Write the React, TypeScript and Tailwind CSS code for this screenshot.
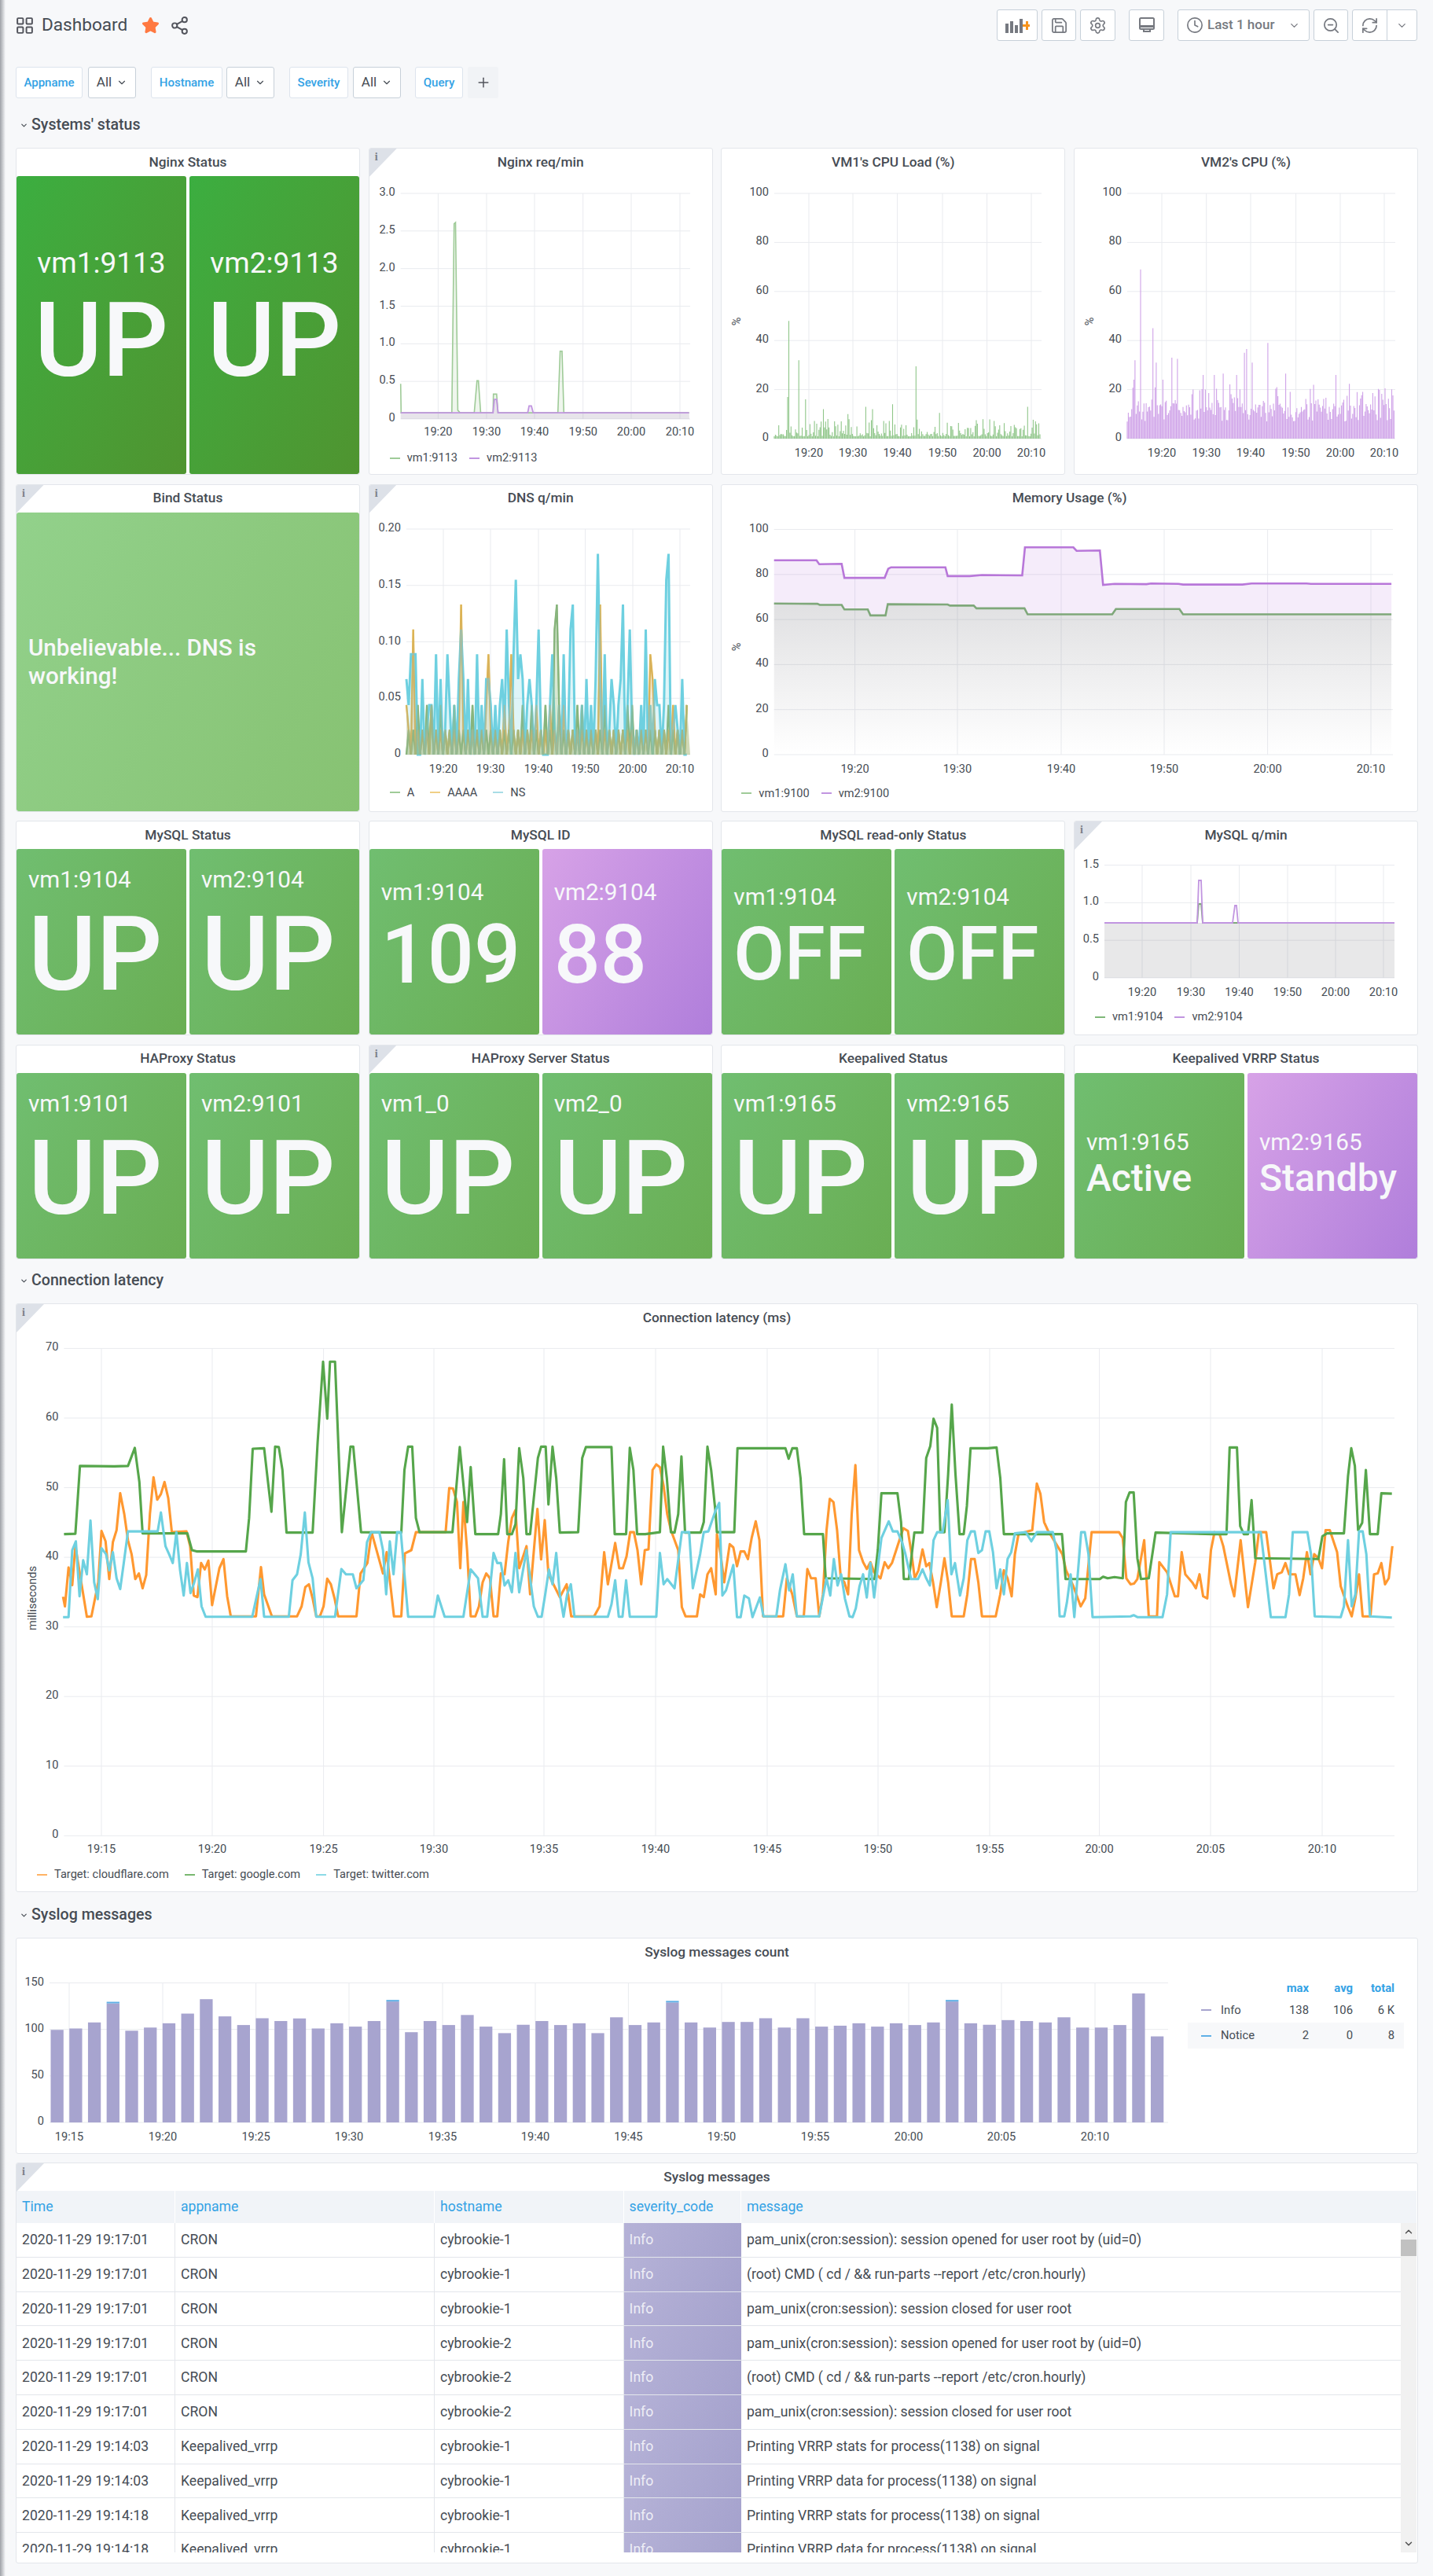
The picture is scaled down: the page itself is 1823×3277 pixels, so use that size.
import React from 'react';
import { ChevronDown, Clock, LayoutGrid, Plus, RefreshCw, Save, Settings, Share2, Star, ZoomOut, ChevronUp } from 'lucide-react';

const GREEN = '#56a64b';
const ORANGE = '#ff9830';
const BLUE = '#6ed0e0';

// series read off the chart, in crop coordinates
const latencyGreen = [
  '140,650 165,649 175,480 250,481 280,480 295,435 305,520 312,648 410,648 420,690 430,693 538,693 545,610 553,437 578,436 594,594 602,432 610,433 618,490 627,646 684,646 695,420 707,220 716,362 722,220 733,220 748,645 767,432 773,432 790,645 878,646 885,490 893,432 902,432 910,610 918,645 990,645 1006,433 1022,620 1030,483 1040,650 1090,650 1096,600 1103,463 1110,650 1120,650 1128,625 1136,436 1145,510 1152,650 1160,650 1177,460 1184,432 1194,432 1200,576 1209,432 1217,510 1225,646 1265,645 1274,460 1282,433 1338,433 1345,650 1370,650 1378,435 1386,490 1394,650 1412,650 1444,645 1451,432 1459,510 1468,645 1476,646 1484,600 1491,456 1499,646 1533,646 1540,620 1548,432 1556,490 1566,600',
  '0,645 38,645 45,436 150,436 157,462 165,436 175,436 183,510 191,650 232,650 238,760 345,762 352,690 360,548 395,548 403,620 409,762 420,762 432,646 450,646 458,460 467,430 474,362 482,385 489,645 498,645 506,500 514,327 522,500 531,650 540,650 547,580 555,436 592,436 612,434 620,510 628,650 755,650 763,762 838,762 845,756 855,760 870,757 888,760 895,570 903,546 912,546 920,710 928,762 945,760 960,646 1085,650 1115,650 1122,434 1138,434 1145,630 1153,650 1162,650 1170,565 1178,710 1316,712 1325,655 1335,648 1372,648 1381,505 1388,436 1396,480 1403,640 1412,622 1420,490 1429,650 1446,650 1454,548 1477,549',
];
const latencyOrange = [
  '138,806 142,830 150,733 158,777 165,680 175,750 190,856 200,855 215,770 222,642 231,668 239,762 247,670 255,640 263,548 272,600 280,665 288,700 296,762 304,748 312,785 320,752 328,600 336,508 344,564 352,550 360,520 368,560 376,645 408,643 416,680 424,803 432,807 440,722 448,738 456,716 464,827 480,735 489,712 497,805 505,855 560,855 571,732 578,800 595,855 650,855 660,830 668,782 676,775 684,810 692,855 700,855 708,830 716,761 724,775 732,810 740,855 780,855 789,748 804,722 813,645 838,748 846,695 862,855 878,855 886,698 900,690 910,645 975,645 983,535 991,536 1000,570 1007,735 1014,570 1022,690 1030,855 1040,855 1048,830 1056,770 1064,748 1072,760 1080,855 1088,855 1096,748 1104,750 1112,670 1120,610 1128,590 1136,735 1152,680 1160,800 1176,587 1184,713 1192,615 1200,750 1225,807 1240,775 1250,855 1300,855 1312,830 1322,695 1330,775 1346,672 1355,735 1363,735 1371,705 1379,645 1387,645 1395,690 1403,775 1411,690 1419,688 1428,490 1436,476 1444,483 1452,530 1460,600 1468,640 1484,690 1492,832 1500,855 1525,855 1532,800 1540,807 1548,750 1556,735 1566,800',
  '0,650 8,700 16,770 28,675 36,683 44,730 52,693 60,693 68,712 76,660 85,618 93,665 101,855 145,855 153,760 165,800 175,855 190,855 198,737 206,760 216,760 224,855 232,800 240,640 247,562 255,570 263,640 271,760 279,770 287,800 295,600 303,478 311,690 320,720 328,737 336,720 344,745 358,760 367,720 375,735 383,722 395,680 408,635 418,642 426,700 433,760 441,740 450,688 458,730 465,722 473,770 481,832 490,770 498,710 506,770 514,855 540,855 548,800 556,712 564,712 572,770 580,855 610,855 620,800 628,740 636,760 645,805 652,700 660,650 690,640 700,524 708,550 716,620 724,640 756,700 764,740 780,780 796,830 806,810 820,645 880,645 888,660 896,760 905,775 913,773 920,762 935,665 945,855 963,855 968,720 985,745 1002,805 1009,805 1017,695 1025,750 1040,770 1048,785 1056,750 1064,805 1073,810 1081,690 1089,645 1100,650 1108,680 1125,775 1132,805 1146,665 1162,832 1178,720 1186,645 1202,645 1218,785 1226,750 1236,745 1244,722 1252,750 1266,750 1275,802 1283,760 1291,695 1299,750 1307,700 1316,710 1324,735 1332,640 1341,640 1357,695 1365,780 1381,832 1389,855 1397,810 1405,750 1413,855 1430,855 1438,750 1446,748 1454,722 1462,775 1470,760 1478,680',
];
const latencyBlue = [
  '138,857 150,857 158,690 166,668 174,805 182,715 190,750 198,616 206,770 214,812 222,685 232,700 239,740 247,695 255,760 263,787 271,720 280,643 345,643 352,596 362,680 370,700 378,722 386,645 394,740 402,803 409,722 417,797 425,770 433,738 441,830 450,856 552,856 570,762 578,856 632,856 640,765 650,750 658,700 667,596 675,720 684,760 692,856 733,856 747,737 757,750 772,750 780,785 795,765 803,670 812,645 830,645 838,690 845,800 853,668 861,750 869,645 877,645 893,856 950,856 958,803 973,856 1014,856 1030,738 1046,760 1056,856 1066,856 1080,697 1088,722 1096,722 1104,778 1112,765 1120,795 1128,697 1136,795 1152,690 1168,830 1177,856 1185,856 1193,800 1201,738 1209,775 1217,697 1225,800 1233,856 1241,800 1249,775 1257,856 1330,856 1338,825 1346,765 1354,856 1362,856 1370,765 1378,856 1436,856 1444,697 1452,775 1460,762 1476,785 1492,645 1508,645 1516,785 1532,700 1540,645 1550,643 1566,590',
  '5,572 12,803 20,790 36,727 44,857 52,857 60,803 70,810 78,857 94,808 102,855 130,855 138,790 150,725 158,790 166,750 175,855 224,855 240,760 248,803 256,712 264,778 272,750 280,810 290,855 297,857 304,835 312,780 320,750 328,808 336,722 344,808 360,660 376,618 385,643 395,643 405,670 412,697 425,762 440,762 450,738 458,760 466,778 474,665 482,645 494,645 505,565 513,750 521,722 532,803 540,760 548,665 556,643 564,643 572,697 580,690 588,643 596,643 604,695 612,785 620,738 628,800 636,712 644,695 652,648 676,645 688,668 700,645 735,645 743,690 750,855 760,855 766,820 774,750 782,857 797,645 805,645 813,700 822,857 905,855 912,852 920,857 975,857 985,800 993,645 1190,645 1212,857 1244,857 1252,800 1260,645 1292,645 1300,700 1308,855 1365,857 1372,830 1381,665 1389,830 1397,800 1405,643 1413,643 1421,700 1429,855 1477,858',
];

const memPurple = '125,228 218,228 224,239 273,238 279,278 367,278 375,252 381,248 500,248 505,273 553,273 580,270 668,271 674,191 780,191 787,201 838,200 845,298 870,295 940,296 950,294 1010,295 1020,297 1150,297 1170,294 1290,294 1300,295 1476,295';
const memGreen = '125,351 220,352 225,355 273,355 279,368 330,368 336,385 369,385 374,353 505,354 510,357 562,357 568,365 673,365 680,382 865,382 873,367 1012,367 1020,382 1075,382 1476,382';

const syslogCounts = [
  99.5, 101, 107.5, 128, 98.6, 102, 106.6, 117, 132.5, 114, 104.7, 112, 109, 111.8, 101, 106.6, 103, 109, 130, 97, 109, 104.7, 115.5, 103, 96, 105, 109, 104.7, 106.6, 96, 113, 104.7, 107.5, 129, 107.5, 102,
  108, 108, 112, 102, 112, 103, 104, 106.6, 103, 106.6, 104.7, 107.5, 130, 106.6, 105, 110, 109, 107.5, 113, 102, 102, 104.7, 138.7, 92.5,
];

const tableRows = [
  ['2020-11-29 19:17:01', 'CRON', 'cybrookie-1', 'pam_unix(cron:session): session opened for user root by (uid=0)'],
  ['2020-11-29 19:17:01', 'CRON', 'cybrookie-1', '(root) CMD ( cd / && run-parts --report /etc/cron.hourly)'],
  ['2020-11-29 19:17:01', 'CRON', 'cybrookie-1', 'pam_unix(cron:session): session closed for user root'],
  ['2020-11-29 19:17:01', 'CRON', 'cybrookie-2', 'pam_unix(cron:session): session opened for user root by (uid=0)'],
  ['2020-11-29 19:17:01', 'CRON', 'cybrookie-2', '(root) CMD ( cd / && run-parts --report /etc/cron.hourly)'],
  ['2020-11-29 19:17:01', 'CRON', 'cybrookie-2', 'pam_unix(cron:session): session closed for user root'],
  ['2020-11-29 19:14:03', 'Keepalived_vrrp', 'cybrookie-1', 'Printing VRRP stats for process(1138) on signal'],
  ['2020-11-29 19:14:03', 'Keepalived_vrrp', 'cybrookie-1', 'Printing VRRP data for process(1138) on signal'],
  ['2020-11-29 19:14:18', 'Keepalived_vrrp', 'cybrookie-1', 'Printing VRRP stats for process(1138) on signal'],
  ['2020-11-29 19:14:18', 'Keepalived_vrrp', 'cybrookie-1', 'Printing VRRP data for process(1138) on signal'],
];

const rng = (seed: number) => () => {
  seed = (seed * 16807) % 2147483647;
  return seed / 2147483647;
};

const parsePts = (s: string, sx: (x: number) => number, sy: (y: number) => number) =>
  s.split(' ').map((p) => {
    const [x, y] = p.split(',').map(Number);
    return `${sx(x).toFixed(1)},${sy(y).toFixed(1)}`;
  }).join(' ');

const latencyPts = (pair: string[]) => {
  const sy = (y: number) => 1620 + y / 1.96;
  return parsePts(pair[0], (x) => x / 1.72, sy) + ' ' + parsePts(pair[1], (x) => 912 + x / 1.72, sy);
};

const memX = (x: number) => 912 + x / 1.72;
const memY = (y: number) => 610 + y / 2.24;

type ChartProps = {
  ox: number;
  oy: number;
  w: number;
  h: number;
  x0: number;
  x1: number;
  yTop: number;
  yBot: number;
  yTicks: string[];
  xTicks: [string, number][];
  labelY: number;
  yTitle?: [string, number, number];
  children?: React.ReactNode;
};

// plot with page coordinates, shifted to the svg's own origin
const Chart = ({ ox, oy, w, h, x0, x1, yTop, yBot, yTicks, xTicks, labelY, yTitle, children }: ChartProps) => (
  <svg width={w} height={h} className="block shrink-0">
    <g transform={`translate(${-ox},${-oy})`}>
      {yTicks.map((t, i) => {
        const y = yTop + ((yBot - yTop) * i) / (yTicks.length - 1);
        return (
          <g key={t}>
            <line x1={x0} x2={x1} y1={y} y2={y} stroke="#e9ebef" />
            <text x={x0 - 7} y={y - 2} textAnchor="end" dominantBaseline="central" fontSize="14.6" fill="#464c54">{t}</text>
          </g>
        );
      })}
      {xTicks.map(([t, x]) => (
        <g key={t}>
          <line x1={x} x2={x} y1={yTop} y2={yBot} stroke="#e9ebef" />
          <text x={x} y={labelY} textAnchor="middle" dominantBaseline="central" fontSize="14.6" fill="#464c54">{t}</text>
        </g>
      ))}
      {yTitle && (
        <text x={yTitle[1]} y={yTitle[2]} textAnchor="middle" dominantBaseline="central" fontSize="14.6" fill="#464c54" transform={`rotate(-90 ${yTitle[1]} ${yTitle[2]})`}>{yTitle[0]}</text>
      )}
      {children}
    </g>
  </svg>
);

const InfoCorner = () => (
  <>
    <div className="absolute left-0 top-0 w-[35px] h-[36px] bg-[#dde1e8] [clip-path:polygon(0_0,100%_0,0_100%)]" />
    <span className="absolute left-[7px] top-[2px] text-[14px] leading-[18px] font-bold font-['Liberation_Serif',serif] text-[#7b8087]">i</span>
  </>
);

const Panel = ({ title, info, className, children }: { title: string; info?: boolean; className?: string; children: React.ReactNode }) => (
  <div className={`relative flex flex-col bg-white border border-[#e3e6eb] rounded-[3px] overflow-hidden ${className ?? ''}`}>
    {info && <InfoCorner />}
    <div className="h-[35px] shrink-0 flex items-center justify-center text-[17.3px] font-medium text-[#464c54]">{title}</div>
    {children}
  </div>
);

const Legend = ({ items, className }: { items: [string, string][]; className: string }) => (
  <div className={`flex items-center gap-[15px] text-[14.6px] text-[#464c54] ${className}`}>
    {items.map(([name, color]) => (
      <div key={name} className="flex items-center gap-[9px]">
        <span className="w-[13px] h-[2px]" style={{ backgroundColor: color }} />
        <span>{name}</span>
      </div>
    ))}
  </div>
);

type CellProps = { label: string; value: string; tone: string; labelCls: string; valueCls: string; align?: string };

const TONES: Record<string, string> = {
  dark: 'from-[#3bae40] to-[#4f9430]',
  green: 'from-[#70be70] to-[#6aae53]',
  purple: 'from-[#d7a2e7] to-[#b07edb]',
};

const Cell = ({ label, value, tone, labelCls, valueCls, align }: CellProps) => (
  <div className={`flex-1 flex flex-col justify-center rounded-[3px] text-[#f7f8fa] bg-linear-120 whitespace-nowrap overflow-hidden ${TONES[tone]} ${align ?? 'pl-[15px]'}`}>
    <div className={labelCls}>{label}</div>
    <div className={valueCls}>{value}</div>
  </div>
);

const StatusPanel = ({ title, info, children }: { title: string; info?: boolean; children: React.ReactNode }) => (
  <Panel title={title} info={info}>
    <div className="flex-1 flex gap-[4px]">{children}</div>
  </Panel>
);

const L = 'text-[29.6px] leading-[33px]';
const UP = 'text-[132px] leading-[157px] font-medium';

const UpCell = ({ label }: { label: string }) => <Cell label={label} value="UP" tone="green" labelCls={L} valueCls={UP} />;

const NginxChart = () => {
  const sx = (x: number) => x / 1.72;
  const sy = (y: number) => y / 2.529;
  const g = parsePts('875,1235 876,1328 987,1328 992,720 995,716 1000,1320 1005,1328 1036,1328 1042,1225 1045,1225 1050,1328 1077,1328 1078,1268 1085,1268 1088,1328 1219,1328 1224,1130 1228,1130 1232,1328 1506,1328', sx, sy);
  const p = parsePts('875,1328 1077,1328 1080,1285 1085,1285 1088,1328 1153,1328 1156,1306 1161,1306 1165,1328 1506,1328', sx, sy);
  return (
    <Chart ox={469} oy={224} w={436} h={341} x0={508.7} x1={877} yTop={246} yBot={533}
      yTicks={['3.0', '2.5', '2.0', '1.5', '1.0', '0.5', '0']}
      xTicks={[['19:20', 556.4], ['19:30', 618], ['19:40', 679], ['19:50', 740.7], ['20:00', 802], ['20:10', 864]]} labelY={549}>
      <polygon points={`508.7,533 ${g} 876,533`} fill="#7eb26d" fillOpacity="0.12" />
      <polygon points={`508.7,533 ${p} 876,533`} fill="#b877d9" fillOpacity="0.14" />
      <polyline points={g} fill="none" stroke="#9fcb98" strokeWidth="1.6" />
      <polyline points={p} fill="none" stroke="#c195e0" strokeWidth="1.8" />
    </Chart>
  );
};

// one thin vertical stroke per sample, the way the bars look in the picture
const bars = (seed: number, x0: number, x1: number, yBot: number, pxPer: number, gen: (r: () => number) => number, spikes: [number, number][]) => {
  const r = rng(seed);
  const step = 1.42;
  const n = Math.floor((x1 - x0) / step);
  const vals = Array.from({ length: n }, () => gen(r));
  spikes.forEach(([zx, v]) => {
    const i = Math.round((912 + zx / 1.72 - x0) / step);
    if (i >= 0 && i < n) vals[i] = v;
  });
  return vals.map((v, i) => `M${(x0 + i * step).toFixed(1)} ${yBot}V${(yBot - v * pxPer).toFixed(1)}`).join('');
};

const CpuChart = ({ ox, x0, x1, xs, color, seed, gen, spikes }: { ox: number; x0: number; x1: number; xs: number[]; color: string; seed: number; gen: (r: () => number) => number; spikes: [number, number][] }) => (
  <Chart ox={ox} oy={224} w={436} h={379} x0={x0} x1={x1} yTop={246} yBot={558}
    yTicks={['100', '80', '60', '40', '20', '0']}
    xTicks={[['19:20', xs[0]], ['19:30', xs[1]], ['19:40', xs[2]], ['19:50', xs[3]], ['20:00', xs[4]], ['20:10', xs[5]]]} labelY={576}
    yTitle={['%', ox + 19, 409]}>
    <path d={bars(seed, x0, x1, 558, 3.12, gen, spikes)} fill="none" stroke={color} strokeWidth="1.1" />
  </Chart>
);

const DnsChart = () => {
  const r = rng(77);
  const x0 = 516;
  const x1 = 877;
  const yBot = 959;
  const scale = (959 - 672) / 0.2;
  const step = 2.9;
  const n = Math.floor((x1 - x0) / step);
  const bluePeaks: [number, number][] = [[888, 0.067], [897, 0.089], [903, 0.089], [909, 0.089], [920, 0.067], [938, 0.044], [950, 0.089], [962, 0.067], [979, 0.089], [1005, 0.111], [1020, 0.067], [1040, 0.089], [1068, 0.067], [1095, 0.067], [1105, 0.111], [1120, 0.089], [1126, 0.155], [1135, 0.089], [1155, 0.067], [1178, 0.111], [1205, 0.089], [1232, 0.089], [1248, 0.111], [1253, 0.133], [1273, 0.044], [1305, 0.178], [1322, 0.089], [1335, 0.067], [1355, 0.067], [1362, 0.133], [1375, 0.111], [1410, 0.111], [1436, 0.044], [1456, 0.155], [1460, 0.178], [1475, 0.044], [1492, 0.067]];
  const series = (peaks: [number, number][], lows: number[], zero: number) => {
    const vals = Array.from({ length: n }, (_, i) => (i % 2 && r() > zero ? lows[Math.floor(r() * lows.length)] : 0));
    peaks.forEach(([zx, v]) => {
      const i = Math.round((zx / 1.72 - x0) / step);
      if (i >= 0 && i < n) vals[i] = v;
    });
    return vals.map((v, i) => `${(x0 + i * step).toFixed(1)},${(yBot - v * scale).toFixed(1)}`).join(' ');
  };
  const green = series([[1217, 0.133], [1211, 0.111]], [0.022, 0.022, 0.022, 0.044], 0);
  const orange = series([[888, 0.044], [903, 0.111], [1007, 0.133], [1069, 0.089], [1116, 0.089], [1420, 0.089], [1425, 0.067], [1310, 0.133]], [0.022, 0.022, 0.022, 0.044], 0);
  const blue = series(bluePeaks, [0.022, 0.022, 0.044, 0.044, 0.067], 0.1);
  const close = `${x1},${yBot} ${x0},${yBot}`;
  return (
    <Chart ox={469} oy={651} w={436} h={340} x0={x0} x1={x1} yTop={672} yBot={yBot}
      yTicks={['0.20', '0.15', '0.10', '0.05', '0']}
      xTicks={[['19:20', 563], ['19:30', 623], ['19:40', 684], ['19:50', 743.6], ['20:00', 804], ['20:10', 864]]} labelY={977}>
      <polyline points={green} fill="none" stroke="#7eb26d" strokeWidth="2.4" />
      <polyline points={orange} fill="none" stroke="#eab839" strokeWidth="2.4" />
      <polygon points={`${blue} ${close}`} fill={BLUE} fillOpacity="0.22" />
      <polyline points={blue} fill="none" stroke={BLUE} strokeWidth="3" />
      <polygon points={`${orange} ${close}`} fill="#d9b36a" fillOpacity="0.28" />
      <polygon points={`${green} ${close}`} fill="#7eb26d" fillOpacity="0.3" />
      <polyline points={orange} fill="none" stroke="#c9ad7a" strokeWidth="1.8" strokeOpacity="0.5" />
      <polyline points={green} fill="none" stroke="#8fb58a" strokeWidth="1.8" strokeOpacity="0.6" />
    </Chart>
  );
};

const MemoryChart = () => {
  const p = parsePts(memPurple, memX, memY);
  const g = parsePts(memGreen, memX, memY);
  const gReversed = g.split(' ').reverse().join(' ');
  return (
    <Chart ox={918} oy={651} w={885} h={340} x0={984.7} x1={1772} yTop={672.5} yBot={959}
      yTicks={['100', '80', '60', '40', '20', '0']}
      xTicks={[['19:20', 1087.6], ['19:30', 1218], ['19:40', 1350], ['19:50', 1481], ['20:00', 1612.6], ['20:10', 1744]]} labelY={977}
      yTitle={['%', 937, 822]}>
      <defs>
        <linearGradient id="memFill" x1="0" x2="0" y1="0" y2="1">
          <stop offset="0" stopColor="#4a4a55" stopOpacity="0.17" />
          <stop offset="1" stopColor="#4a4a55" stopOpacity="0" />
        </linearGradient>
      </defs>
      <polygon points={`${p} ${gReversed}`} fill="#b877d9" fillOpacity="0.14" />
      <polygon points={`${g} 1770,959 984.7,959`} fill="url(#memFill)" />
      <polyline points={p} fill="none" stroke="#b877d9" strokeWidth="2.6" />
      <polyline points={g} fill="none" stroke="#7fa87a" strokeWidth="2.6" />
    </Chart>
  );
};

const MysqlChart = () => {
  const base = 1174;
  const g = `1405,${base} 1523,${base} 1525,1150 1528,1150 1530,${base} 1774,${base}`;
  const p = `1405,${base} 1523,${base} 1525,1120 1528,1120 1530,${base} 1568,${base} 1571,1152 1573,1152 1575,${base} 1774,${base}`;
  return (
    <Chart ox={1367} oy={1080} w={436} h={197} x0={1405} x1={1774} yTop={1100.6} yBot={1244}
      yTicks={['1.5', '1.0', '0.5', '0']}
      xTicks={[['19:20', 1453], ['19:30', 1515], ['19:40', 1576.5], ['19:50', 1638], ['20:00', 1699], ['20:10', 1760]]} labelY={1262}>
      <polygon points={`1405,1244 1405,${base} 1774,${base} 1774,1244`} fill="#4a4a55" fillOpacity="0.13" />
      <polyline points={g} fill="none" stroke="#7fa87a" strokeWidth="1.8" />
      <polyline points={p} fill="none" stroke="#c195e0" strokeWidth="1.8" />
    </Chart>
  );
};

const LatencyChart = () => (
  <Chart ox={21} oy={1694} w={1782} h={672} x0={81.4} x1={1774} yTop={1715.4} yBot={2335.3}
    yTicks={['70', '60', '50', '40', '30', '20', '10', '0']}
    xTicks={[['19:15', 129], ['19:20', 270], ['19:25', 411.6], ['19:30', 552], ['19:35', 692], ['19:40', 834], ['19:45', 976], ['19:50', 1117], ['19:55', 1259], ['20:00', 1398.6], ['20:05', 1540], ['20:10', 1682]]} labelY={2352}
    yTitle={['milliseconds', 41, 2033]}>
    <polyline points={latencyPts(latencyOrange)} fill="none" stroke={ORANGE} strokeWidth="3.1" strokeLinejoin="round" />
    <polyline points={latencyPts(latencyGreen)} fill="none" stroke={GREEN} strokeWidth="3.1" strokeLinejoin="round" />
    <polyline points={latencyPts(latencyBlue)} fill="none" stroke={BLUE} strokeWidth="3.1" strokeLinejoin="round" />
  </Chart>
);

const SyslogChart = () => (
  <Chart ox={21} oy={2501} w={1490} h={238} x0={63} x1={1486} yTop={2522.5} yBot={2700}
    yTicks={['150', '100', '50', '0']}
    xTicks={[['19:15', 88], ['19:20', 207], ['19:25', 325.6], ['19:30', 444], ['19:35', 563], ['19:40', 681], ['19:45', 799.4], ['19:50', 918], ['19:55', 1037], ['20:00', 1156], ['20:05', 1274], ['20:10', 1393]]} labelY={2718}>
    {syslogCounts.map((v, i) => {
      const h = v * (177.5 / 150);
      const x = 64.5 + i * 23.72;
      const tip = i === 3 || i === 18 || i === 33 || i === 48;
      return (
        <g key={i}>
          <rect x={x} y={2700 - h} width={16.3} height={h} fill="#a7a4cf" />
          {tip && <rect x={x} y={2700 - h - 2} width={16.3} height={2} fill="#5fb0e6" />}
        </g>
      );
    })}
  </Chart>
);

const Btn = ({ className, children }: { className: string; children: React.ReactNode }) => (
  <div className={`h-[40px] flex items-center justify-center bg-white border border-[#c7d0d9] rounded-[3px] text-[#767980] ${className}`}>{children}</div>
);

const VarLabel = ({ className, children }: { className: string; children: React.ReactNode }) => (
  <div className={`h-[40px] flex items-center justify-center bg-white border border-[#dde4ed] rounded-[3px] text-[15px] font-medium text-[#33a2e5] ${className}`}>{children}</div>
);

const VarValue = ({ className }: { className: string }) => (
  <div className={`h-[40px] w-[61px] flex items-center justify-center gap-[6px] bg-white border border-[#c7d0d9] rounded-[3px] text-[17px] text-[#464c54] ${className}`}>
    All
    <ChevronDown size={14} strokeWidth={2} />
  </div>
);

const SectionTitle = ({ className, children }: { className: string; children: React.ReactNode }) => (
  <div className={`h-[28px] flex items-center pl-[5px] gap-[4px] text-[19.6px] font-medium text-[#464c54] ${className}`}>
    <ChevronDown size={11} strokeWidth={2.5} />
    {children}
  </div>
);

export default function App() {
  return (
    <div className="relative w-[1823px] h-[3277px] overflow-hidden bg-[#f7f8fa] pl-[20px] pr-[19px] pt-[12px] font-['Roboto',sans-serif]">
      <div className="absolute left-0 top-0 h-full w-[7px] bg-linear-to-r from-[#9ea1a7] to-transparent" />

      {/* Top bar */}
      <div className="flex items-center h-[40px]">
        <LayoutGrid size={25} strokeWidth={1.9} className="-ml-[1px] text-[#52545c]" />
        <span className="ml-[9px] text-[22.6px] text-[#464c54]">Dashboard</span>
        <Star size={23} fill="#ff7941" stroke="#ff7941" className="ml-[18px]" />
        <Share2 size={25} strokeWidth={1.9} className="ml-[13px] text-[#52545c]" />
        <div className="ml-auto flex items-center mr-[1px]">
          <Btn className="w-[52px]">
            <svg width="32" height="22" viewBox="0 0 32 22">
              <rect x="1" y="9" width="4" height="12" fill="#767980" />
              <rect x="7" y="6" width="4" height="15" fill="#767980" />
              <rect x="13" y="11" width="4" height="10" fill="#767980" />
              <rect x="19" y="3" width="4" height="18" fill="#767980" />
              <path d="M23 10h4V6h3v4h2v3h-2v4h-3v-4h-4z" fill="#f7941d" />
            </svg>
          </Btn>
          <Btn className="w-[44px] ml-[5px]"><Save size={23} strokeWidth={1.8} /></Btn>
          <Btn className="w-[45px] ml-[5px]"><Settings size={23} strokeWidth={1.7} /></Btn>
          <Btn className="w-[45px] ml-[17px]">
            <svg width="22" height="22" viewBox="0 0 22 22" fill="none" stroke="#767980" strokeWidth="2">
              <rect x="2" y="2" width="18" height="14" rx="1.5" />
              <path d="M2 12.5h18" strokeWidth="3" />
              <path d="M7 16v3h8v-3" />
            </svg>
          </Btn>
          <Btn className="w-[168px] ml-[17px] pl-[10px] pr-[11px] !justify-start">
            <Clock size={22} strokeWidth={1.8} className="shrink-0" />
            <span className="ml-[5px] text-[17px] font-medium whitespace-nowrap">Last 1 hour</span>
            <ChevronDown size={15} strokeWidth={2} className="ml-auto" />
          </Btn>
          <Btn className="w-[44px] ml-[5px]"><ZoomOut size={23} strokeWidth={1.8} /></Btn>
          <Btn className="w-[83px] ml-[5px] !justify-start">
            <div className="w-[44px] h-full flex items-center justify-center border-r border-[#c7d0d9]"><RefreshCw size={23} strokeWidth={1.8} /></div>
            <div className="flex-1 flex items-center justify-center"><ChevronDown size={15} strokeWidth={2} /></div>
          </Btn>
        </div>
      </div>

      {/* Variables */}
      <div className="flex items-center mt-[33px]">
        <VarLabel className="w-[85px]">Appname</VarLabel>
        <VarValue className="ml-[7px]" />
        <VarLabel className="w-[91px] ml-[19px]">Hostname</VarLabel>
        <VarValue className="ml-[5px]" />
        <VarLabel className="w-[75px] ml-[19px]">Severity</VarLabel>
        <VarValue className="ml-[6px]" />
        <VarLabel className="w-[61px] ml-[18px]">Query</VarLabel>
        <div className="w-[39px] h-[40px] ml-[6px] flex items-center justify-center rounded-[3px] bg-[#f1f3f6] text-[#52545c]"><Plus size={20} strokeWidth={1.8} /></div>
      </div>

      <SectionTitle className="mt-[20px]">Systems' status</SectionTitle>

      <div className="grid grid-cols-4 grid-rows-[416px_417px_273px_273px] gap-x-[10.67px] gap-y-[11.5px] mt-[15px]">
        <StatusPanel title="Nginx Status">
          <Cell label="vm1:9113" value="UP" tone="dark" align="items-center" labelCls="text-[37px] leading-[40px]" valueCls={UP} />
          <Cell label="vm2:9113" value="UP" tone="dark" align="items-center" labelCls="text-[37px] leading-[40px]" valueCls={UP} />
        </StatusPanel>
        <Panel title="Nginx req/min" info>
          <NginxChart />
          <Legend className="pl-[26px] h-[36px]" items={[['vm1:9113', '#9fcb98'], ['vm2:9113', '#c195e0']]} />
        </Panel>
        <Panel title="VM1's CPU Load (%)">
          <CpuChart ox={918} x0={985} x1={1325} xs={[1029, 1085, 1141.6, 1199, 1255.6, 1312]} color="#8fc689" seed={11}
            gen={(r) => 1 + Math.pow(r(), 3) * 7}
            spikes={[[157, 48], [155, 17], [180, 32], [195, 16], [233, 12], [287, 10], [325, 13], [340, 12], [385, 14], [436, 29.5], [487, 10.5], [680, 13]]} />
        </Panel>
        <Panel title="VM2's CPU (%)">
          <CpuChart ox={1367} x0={1434} x1={1775} xs={[1478, 1534.7, 1591, 1648.6, 1705, 1761]} color="#cfa2e8" seed={23}
            gen={(r) => 7 + r() * 7 + Math.pow(r(), 4) * 10}
            spikes={[[928, 69], [953, 45], [916, 32], [913, 24], [962, 31], [977, 24], [996, 33], [1008, 32.5], [1065, 26], [1088, 26], [1108, 26.5], [1136, 26], [1155, 35], [1160, 36.5], [1172, 31], [1206, 39], [1245, 26.5], [1305, 22], [1355, 26], [1462, 20.5]]} />
        </Panel>

        <Panel title="Bind Status" info>
          <div className="flex-1 flex items-center pl-[15px] pr-[15px] rounded-[3px] bg-linear-120 from-[#92d18b] to-[#87c272] text-[29.6px] leading-[36px] font-medium text-[#f7f8fa]">
            Unbelievable... DNS is working!
          </div>
        </Panel>
        <Panel title="DNS q/min" info>
          <DnsChart />
          <Legend className="pl-[26px] h-[34px] !gap-[20px]" items={[['A', '#9fcb98'], ['AAAA', '#f0cf85'], ['NS', '#a8dde6']]} />
        </Panel>
        <Panel title="Memory Usage (%)" className="col-span-2">
          <MemoryChart />
          <Legend className="pl-[25px] h-[36px]" items={[['vm1:9100', '#9fcb98'], ['vm2:9100', '#c195e0']]} />
        </Panel>

        <StatusPanel title="MySQL Status">
          <UpCell label="vm1:9104" />
          <UpCell label="vm2:9104" />
        </StatusPanel>
        <StatusPanel title="MySQL ID">
          <Cell label="vm1:9104" value="109" tone="green" labelCls={L} valueCls="text-[104px] leading-[125px] font-medium" />
          <Cell label="vm2:9104" value="88" tone="purple" labelCls={L} valueCls="text-[104px] leading-[125px] font-medium" />
        </StatusPanel>
        <StatusPanel title="MySQL read-only Status">
          <Cell label="vm1:9104" value="OFF" tone="green" labelCls={L} valueCls="text-[94px] leading-[113px] font-medium" />
          <Cell label="vm2:9104" value="OFF" tone="green" labelCls={L} valueCls="text-[94px] leading-[113px] font-medium" />
        </StatusPanel>
        <Panel title="MySQL q/min" info>
          <MysqlChart />
          <Legend className="pl-[26px] h-[34px]" items={[['vm1:9104', '#7fb878'], ['vm2:9104', '#c195e0']]} />
        </Panel>

        <StatusPanel title="HAProxy Status">
          <UpCell label="vm1:9101" />
          <UpCell label="vm2:9101" />
        </StatusPanel>
        <StatusPanel title="HAProxy Server Status" info>
          <UpCell label="vm1_0" />
          <UpCell label="vm2_0" />
        </StatusPanel>
        <StatusPanel title="Keepalived Status">
          <UpCell label="vm1:9165" />
          <UpCell label="vm2:9165" />
        </StatusPanel>
        <StatusPanel title="Keepalived VRRP Status">
          <Cell label="vm1:9165" value="Active" tone="green" labelCls={L} valueCls="text-[48px] leading-[58px] font-medium" />
          <Cell label="vm2:9165" value="Standby" tone="purple" labelCls={L} valueCls="text-[48px] leading-[58px] font-medium" />
        </StatusPanel>
      </div>

      <SectionTitle className="mt-[13.5px]">Connection latency</SectionTitle>
      <Panel title="Connection latency (ms)" info className="h-[749px] mt-[15px]">
        <LatencyChart />
        <Legend className="pl-[26px] h-[38px] !gap-[20px]" items={[['Target: cloudflare.com', '#ffb265'], ['Target: google.com', '#78b76f'], ['Target: twitter.com', '#8cdae6']]} />
      </Panel>

      <SectionTitle className="mt-[15px]">Syslog messages</SectionTitle>
      <Panel title="Syslog messages count" className="h-[275px] mt-[15px]">
        <div className="flex">
          <SyslogChart />
          <div className="w-[275px] mt-[16px] text-[14.8px] text-[#464c54]">
            <div className="grid grid-cols-[99px_55px_56px_53px] h-[24px] items-center text-right font-bold text-[#33a2e5]">
              <span />
              <span>max</span>
              <span>avg</span>
              <span>total</span>
            </div>
            <div className="grid grid-cols-[99px_55px_56px_53px] h-[32px] items-center text-right">
              <div className="flex items-center gap-[12px] pl-[17px] text-left"><span className="w-[13px] h-[2px] bg-[#a7a4cf]" />Info</div>
              <span>138</span>
              <span>106</span>
              <span>6 K</span>
            </div>
            <div className="grid grid-cols-[99px_55px_56px_53px] h-[33px] items-center text-right bg-[#f7f8fa]">
              <div className="flex items-center gap-[12px] pl-[17px] text-left"><span className="w-[13px] h-[2px] bg-[#5fb0e6]" />Notice</div>
              <span>2</span>
              <span>0</span>
              <span>8</span>
            </div>
          </div>
        </div>
      </Panel>

      <Panel title="Syslog messages" info className="h-[510px] mt-[11px]">
        <div className="grid grid-cols-[202px_330px_240.6px_149.4px_1fr] h-[41px] shrink-0 items-center bg-[#f1f4f8] text-[17.6px] text-[#33a2e5]">
          {['Time', 'appname', 'hostname', 'severity_code', 'message'].map((h) => (
            <div key={h} className="h-full flex items-center pl-[7px] border-r border-white">{h}</div>
          ))}
        </div>
        <div className="relative h-[418.6px] overflow-hidden text-[17.6px] text-[#464c54]">
          {tableRows.map((row, i) => (
            <div key={i} className="grid grid-cols-[202px_330px_240.6px_149.4px_1fr] h-[43.8px] mr-[21px]">
              <div className="flex items-center pl-[7px] border-r border-b border-[#e3e6eb]">{row[0]}</div>
              <div className="flex items-center pl-[7px] border-r border-b border-[#e3e6eb]">{row[1]}</div>
              <div className="flex items-center pl-[7px] border-r border-b border-[#e3e6eb]">{row[2]}</div>
              <div className="flex items-center pl-[7px] border-b border-[#e3e6eb] bg-linear-120 from-[#b5b2d7] to-[#a5a2cd] text-[#eeeef6]">Info</div>
              <div className="flex items-center pl-[7px] border-b border-[#e3e6eb] whitespace-nowrap">{row[3]}</div>
            </div>
          ))}
          <div className="absolute right-[1.5px] top-0 bottom-0 w-[20px] bg-[#f1f1f1] flex flex-col items-center justify-between text-[#505050]">
            <ChevronUp size={14} strokeWidth={2.5} className="mt-[4px]" />
            <div className="absolute top-[21px] left-0 w-full h-[21px] bg-[#c1c1c1]" />
            <ChevronDown size={14} strokeWidth={2.5} className="mb-[4px]" />
          </div>
        </div>
      </Panel>
    </div>
  );
}
